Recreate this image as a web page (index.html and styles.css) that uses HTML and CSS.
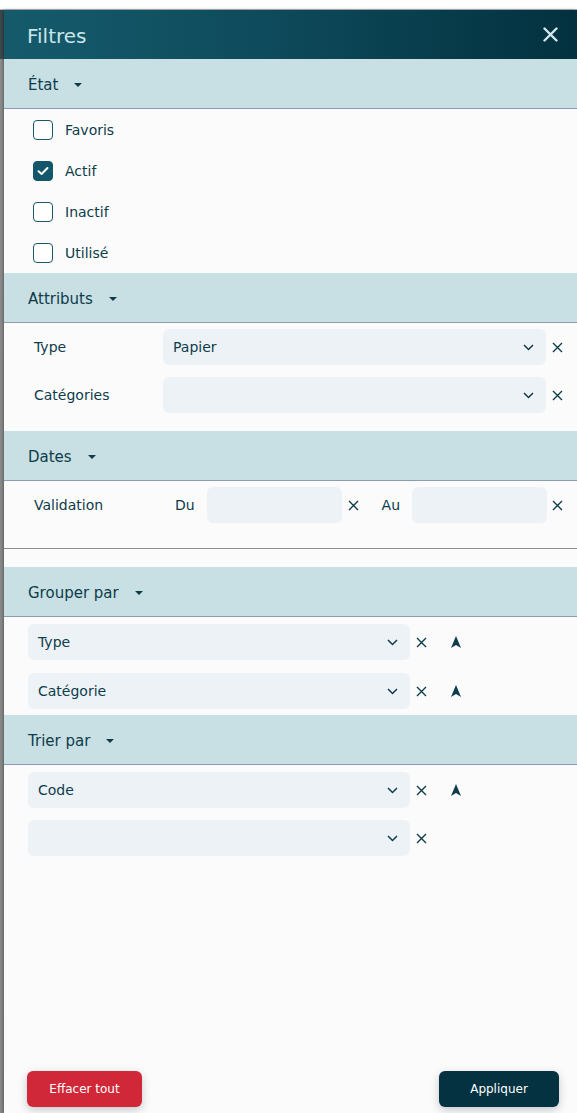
FILE: index.html
```html
<!DOCTYPE html>
<html lang="fr">
<head>
<meta charset="utf-8">
<title>Filtres</title>
<link rel="stylesheet" href="styles.css">
</head>
<body>
<div class="topbar"></div>
<div class="stage">
  <div class="backdrop"></div>
  <aside class="panel">
    <header class="panel-head">
      <h1 class="panel-title">Filtres</h1>
      <button class="close-btn" aria-label="Fermer">
        <svg width="15" height="15" viewBox="0 0 15 15"><path d="M1.5 1.5 L13.5 13.5 M13.5 1.5 L1.5 13.5" stroke="currentColor" stroke-width="2.4" stroke-linecap="round" fill="none"/></svg>
      </button>
    </header>

    <section class="group">
      <div class="group-head"><span>État</span><span class="caret"></span></div>
      <div class="checks">
        <label class="check-row"><span class="box"></span><span>Favoris</span></label>
        <label class="check-row"><span class="box checked"><svg width="12" height="10" viewBox="0 0 12 10"><path d="M1.5 5.2 L4.6 8 L10.5 2" stroke="#fff" stroke-width="2" fill="none" stroke-linecap="round" stroke-linejoin="round"/></svg></span><span>Actif</span></label>
        <label class="check-row"><span class="box"></span><span>Inactif</span></label>
        <label class="check-row"><span class="box"></span><span>Utilisé</span></label>
      </div>
    </section>

    <section class="group">
      <div class="group-head"><span>Attributs</span><span class="caret"></span></div>
      <div class="fields">
        <div class="field-row">
          <span class="field-label">Type</span>
          <div class="select"><span>Papier</span><svg class="chev" width="11" height="7" viewBox="0 0 11 7"><path d="M1 1 L5.5 5.5 L10 1" stroke="currentColor" stroke-width="1.5" fill="none"/></svg></div>
          <svg class="clear" width="11" height="11" viewBox="0 0 11 11"><path d="M1 1 L10 10 M10 1 L1 10" stroke="currentColor" stroke-width="1.4" fill="none"/></svg>
        </div>
        <div class="field-row">
          <span class="field-label">Catégories</span>
          <div class="select"><span></span><svg class="chev" width="11" height="7" viewBox="0 0 11 7"><path d="M1 1 L5.5 5.5 L10 1" stroke="currentColor" stroke-width="1.5" fill="none"/></svg></div>
          <svg class="clear" width="11" height="11" viewBox="0 0 11 11"><path d="M1 1 L10 10 M10 1 L1 10" stroke="currentColor" stroke-width="1.4" fill="none"/></svg>
        </div>
      </div>
    </section>

    <section class="group dates">
      <div class="group-head"><span>Dates</span><span class="caret"></span></div>
      <div class="date-row">
        <span class="date-label">Validation</span>
        <span class="date-sub">Du</span>
        <div class="date-input"></div>
        <svg class="clear" width="11" height="11" viewBox="0 0 11 11"><path d="M1 1 L10 10 M10 1 L1 10" stroke="currentColor" stroke-width="1.4" fill="none"/></svg>
        <span class="date-sub au">Au</span>
        <div class="date-input"></div>
        <svg class="clear last" width="11" height="11" viewBox="0 0 11 11"><path d="M1 1 L10 10 M10 1 L1 10" stroke="currentColor" stroke-width="1.4" fill="none"/></svg>
      </div>
    </section>

    <section class="group">
      <div class="group-head"><span>Grouper par</span><span class="caret"></span></div>
      <div class="sort-list">
        <div class="sort-row">
          <div class="select wide"><span>Type</span><svg class="chev" width="11" height="7" viewBox="0 0 11 7"><path d="M1 1 L5.5 5.5 L10 1" stroke="currentColor" stroke-width="1.5" fill="none"/></svg></div>
          <svg class="clear" width="11" height="11" viewBox="0 0 11 11"><path d="M1 1 L10 10 M10 1 L1 10" stroke="currentColor" stroke-width="1.4" fill="none"/></svg>
          <svg class="dir" width="10" height="12" viewBox="0 0 10 12"><path d="M5 0 L10 12 L5 9 L0 12 Z" fill="currentColor"/></svg>
        </div>
        <div class="sort-row">
          <div class="select wide"><span>Catégorie</span><svg class="chev" width="11" height="7" viewBox="0 0 11 7"><path d="M1 1 L5.5 5.5 L10 1" stroke="currentColor" stroke-width="1.5" fill="none"/></svg></div>
          <svg class="clear" width="11" height="11" viewBox="0 0 11 11"><path d="M1 1 L10 10 M10 1 L1 10" stroke="currentColor" stroke-width="1.4" fill="none"/></svg>
          <svg class="dir" width="10" height="12" viewBox="0 0 10 12"><path d="M5 0 L10 12 L5 9 L0 12 Z" fill="currentColor"/></svg>
        </div>
      </div>
    </section>

    <section class="group">
      <div class="group-head"><span>Trier par</span><span class="caret"></span></div>
      <div class="sort-list trier">
        <div class="sort-row">
          <div class="select wide"><span>Code</span><svg class="chev" width="11" height="7" viewBox="0 0 11 7"><path d="M1 1 L5.5 5.5 L10 1" stroke="currentColor" stroke-width="1.5" fill="none"/></svg></div>
          <svg class="clear" width="11" height="11" viewBox="0 0 11 11"><path d="M1 1 L10 10 M10 1 L1 10" stroke="currentColor" stroke-width="1.4" fill="none"/></svg>
          <svg class="dir" width="10" height="12" viewBox="0 0 10 12"><path d="M5 0 L10 12 L5 9 L0 12 Z" fill="currentColor"/></svg>
        </div>
        <div class="sort-row">
          <div class="select wide"><span></span><svg class="chev" width="11" height="7" viewBox="0 0 11 7"><path d="M1 1 L5.5 5.5 L10 1" stroke="currentColor" stroke-width="1.5" fill="none"/></svg></div>
          <svg class="clear" width="11" height="11" viewBox="0 0 11 11"><path d="M1 1 L10 10 M10 1 L1 10" stroke="currentColor" stroke-width="1.4" fill="none"/></svg>
        </div>
      </div>
    </section>

    <footer class="panel-foot">
      <button class="btn btn-danger">Effacer tout</button>
      <button class="btn btn-primary">Appliquer</button>
    </footer>
  </aside>
</div>
</body>
</html>
```

FILE: styles.css
```css
* { box-sizing: border-box; }
html, body { margin: 0; padding: 0; }
body {
  background: #fbfbfb;
  font-family: "DejaVu Sans", Verdana, sans-serif;
  color: #0e3c4b;
  width: 577px;
  height: 1113px;
  overflow: hidden;
}
.topbar {
  height: 10px;
  background: #ffffff;
  border-bottom: 1px solid #b9b9b9;
}
.stage {
  display: flex;
  height: 1103px;
}
.backdrop {
  width: 4px;
  flex: none;
  background:
    linear-gradient(to bottom, #3b4a50 0, #3b4a50 49px, #8e8e8e 49px, #8a8a8a 100%);
}
.panel {
  flex: 1;
  display: flex;
  flex-direction: column;
  background: #fbfbfb;
  box-shadow: -1px 0 3px rgba(0,0,0,0.35);
  position: relative;
}
.panel-head {
  height: 49px;
  flex: none;
  display: flex;
  align-items: center;
  justify-content: space-between;
  padding: 0 19px 0 23px;
  background: linear-gradient(to right, #155b6c 0%, #0e4b5c 45%, #03313f 100%);
}
.panel-title {
  margin: 0;
  font-size: 20px;
  font-weight: normal;
  color: #cae5eb;
  line-height: 1;
  position: relative;
  top: 1px;
}
.close-btn {
  border: 0;
  background: none;
  padding: 0;
  color: #d3e9ee;
  width: 15px;
  height: 15px;
  display: flex;
}
.group-head {
  height: 50px;
  flex: none;
  display: flex;
  align-items: center;
  padding-left: 24px;
  background: #c8dfe3;
  border-bottom: 1px solid #8d9bb1;
  font-size: 15px;
  color: #0e3c4b;
}
.group-head span:first-child {
  position: relative;
  top: 1px;
}
.caret {
  width: 0;
  height: 0;
  margin-left: 16px;
  margin-top: 2px;
  border-left: 4px solid transparent;
  border-right: 4px solid transparent;
  border-top: 4px solid #0e3c4b;
}
.checks {
  display: flex;
  flex-direction: column;
}
.check-row {
  height: 41px;
  display: flex;
  align-items: center;
  padding-left: 29px;
  font-size: 14px;
  gap: 12px;
}
.box {
  width: 20px;
  height: 20px;
  border: 1.5px solid #1a5869;
  border-radius: 4px;
  background: #fff;
  display: flex;
  align-items: center;
  justify-content: center;
}
.box.checked {
  background: #14576a;
  border-color: #14576a;
}
.fields {
  display: flex;
  flex-direction: column;
  gap: 12px;
  padding: 6px 0 18px;
}
.field-row {
  display: grid;
  grid-template-columns: 123px 1fr 11px;
  column-gap: 6px;
  align-items: center;
  padding: 0 14px 0 30px;
  font-size: 14px;
}
.select {
  height: 36px;
  border-radius: 6px;
  background: #edf2f7;
  display: flex;
  align-items: center;
  justify-content: space-between;
  padding: 0 12px 0 10px;
  font-size: 14px;
  color: #0e3c4b;
}
.chev { color: #0e3c4b; flex: none; }
.clear { color: #0e3c4b; flex: none; display: block; }
.dates {
  border-bottom: 1px solid #8f8f8f;
  margin-bottom: 18px;
}
.date-row {
  display: flex;
  align-items: center;
  padding: 6px 14px 25px 30px;
  font-size: 14px;
}
.date-label { width: 141px; flex: none; }
.date-sub { margin-right: 12px; flex: none; }
.date-sub.au { margin-left: 23px; }
.date-input {
  flex: 1;
  height: 36px;
  border-radius: 6px;
  background: #edf2f7;
}
.date-row .clear { margin-left: 6px; }
.date-row .clear.last { margin-left: 5px; }
.sort-list {
  display: flex;
  flex-direction: column;
  gap: 13px;
  padding: 7px 0 6px 24px;
}
.sort-list.trier {
  gap: 12px;
  padding-top: 7px;
}
.sort-row {
  display: flex;
  align-items: center;
}
.select.wide { width: 382px; flex: none; }
.sort-row .clear { margin-left: 6px; }
.dir { color: #0e3c4b; margin-left: 24px; flex: none; }
.panel-foot {
  margin-top: auto;
  display: flex;
  justify-content: space-between;
  padding: 0 18px 6px 23px;
}
.btn {
  height: 36px;
  border: 0;
  border-radius: 6px;
  color: #fff;
  font-family: "DejaVu Sans", Verdana, sans-serif;
  font-size: 12px;
  box-shadow: 0 3px 8px rgba(40,50,70,0.25);
}
.btn-danger {
  width: 115px;
  background: #d02838;
}
.btn-primary {
  width: 120px;
  background: #053241;
}
```
